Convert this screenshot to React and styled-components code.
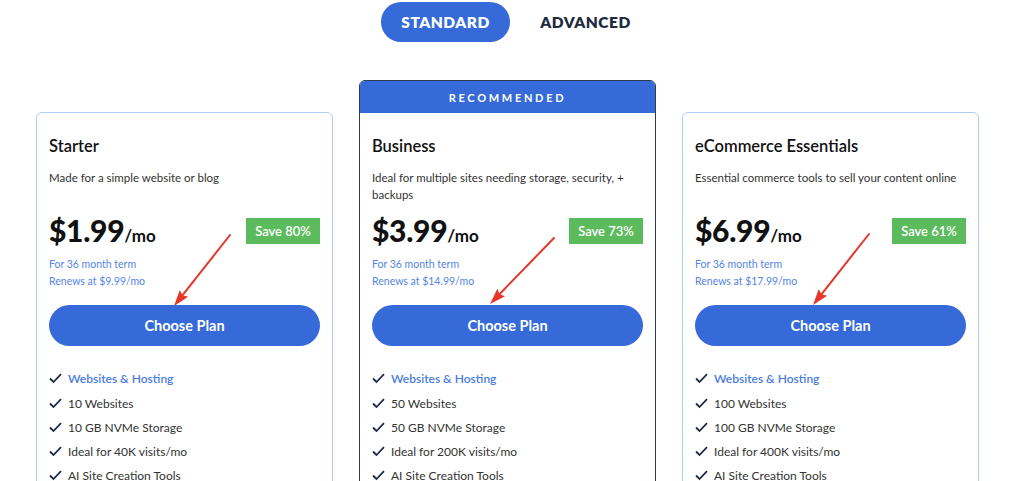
import React from 'react';
import styled, { createGlobalStyle } from 'styled-components';

const GlobalStyle = createGlobalStyle`
  html, body {
    margin: 0;
    padding: 0;
    background: #ffffff;
    overflow: hidden;
  }
  body {
    font-family: Lato, "Open Sans", sans-serif;
    color: #222;
  }
`;

const Page = styled.div`
  width: 1024px;
  height: 481px;
  overflow: hidden;
`;

const Toggle = styled.div`
  display: flex;
  justify-content: center;
  align-items: center;
  gap: 11px;
  padding-top: 2px;
  padding-left: 7px;
`;

const ToggleButton = styled.div`
  width: 129px;
  height: 40px;
  border-radius: 20px;
  display: flex;
  align-items: center;
  justify-content: center;
  font-size: 15.5px;
  font-weight: 800;
  letter-spacing: 0.5px;
  background: ${({ $active }) => ($active ? '#356ad8' : 'transparent')};
  color: ${({ $active }) => ($active ? '#ffffff' : '#202b3f')};
`;

const Cards = styled.div`
  display: flex;
  align-items: flex-start;
  gap: 26px;
  margin-top: 38px;
  padding-left: 36px;
`;

const Card = styled.div`
  position: relative;
  width: 297px;
  box-sizing: border-box;
  margin-top: ${({ $recommended }) => ($recommended ? '0' : '32px')};
  border: 1px solid ${({ $recommended }) => ($recommended ? '#2e3a4d' : '#b3cdf2')};
  border-radius: 6px;
  overflow: hidden;
  background: #fff;
`;

const Ribbon = styled.div`
  height: 32px;
  background: #356ad8;
  color: #fff;
  display: flex;
  align-items: center;
  justify-content: center;
  font-size: 11px;
  font-weight: 700;
  letter-spacing: 2.7px;
`;

const Body = styled.div`
  position: relative;
  padding: 23px 12px 0;
  height: 400px;
`;

const Title = styled.h3`
  margin: 0;
  font-size: 16.5px;
  line-height: 20px;
  font-weight: 600;
  color: #111;
`;

const Desc = styled.p`
  margin: 13px 0 0;
  height: 34px;
  font-size: 11.5px;
  line-height: 17px;
  color: #333;
`;

const PriceRow = styled.div`
  display: flex;
  align-items: center;
  justify-content: space-between;
  margin-top: 12px;
  height: 30px;
`;

const Price = styled.div`
  font-size: 30px;
  font-weight: 900;
  color: #111;
  letter-spacing: -0.3px;

  span {
    font-size: 17px;
    font-weight: 700;
    letter-spacing: 0;
  }
`;

const SaveBadge = styled.div`
  width: 74px;
  height: 26px;
  margin-top: 2px;
  background: #5cbb5c;
  color: #fff;
  display: flex;
  align-items: center;
  justify-content: center;
  font-size: 13px;
  font-weight: 600;
`;

const Term = styled.div`
  margin-top: 11px;
  font-size: 10.5px;
  line-height: 17px;
  color: #5585e6;
`;

const ChooseButton = styled.button`
  display: block;
  width: 100%;
  height: 41px;
  margin-top: 15px;
  border: none;
  border-radius: 21px;
  background: #356ad8;
  color: #fff;
  font-family: inherit;
  font-size: 14.5px;
  font-weight: 700;
`;

const Features = styled.ul`
  list-style: none;
  margin: 20px 0 0;
  padding: 0;
`;

const Feature = styled.li`
  display: flex;
  align-items: center;
  gap: 6px;
  height: ${({ $link }) => ($link ? '25px' : '24px')};
  font-size: 12px;
  color: ${({ $link }) => ($link ? '#4a7ce0' : '#333')};
  font-weight: ${({ $link }) => ($link ? 600 : 400)};
`;

const Arrow = styled.svg`
  position: absolute;
  left: 0;
  top: 0;
  pointer-events: none;
`;

const Check = () => (
  <svg width="13" height="11" viewBox="0 0 13 11">
    <polyline points="1,5.5 4.5,9 12,1.2" fill="none" stroke="#1e2b48" strokeWidth="1.8" />
  </svg>
);

const plans = [
  {
    name: 'Starter',
    desc: 'Made for a simple website or blog',
    price: '$1.99',
    save: 'Save 80%',
    renew: '$9.99/mo',
    features: ['10 Websites', '10 GB NVMe Storage', 'Ideal for 40K visits/mo', 'AI Site Creation Tools'],
    arrow: [193, 122, 137, 193],
  },
  {
    name: 'Business',
    desc: 'Ideal for multiple sites needing storage, security, + backups',
    price: '$3.99',
    save: 'Save 73%',
    renew: '$14.99/mo',
    features: ['50 Websites', '50 GB NVMe Storage', 'Ideal for 200K visits/mo', 'AI Site Creation Tools'],
    arrow: [194, 125, 130, 191],
    recommended: true,
  },
  {
    name: 'eCommerce Essentials',
    desc: 'Essential commerce tools to sell your content online',
    price: '$6.99',
    save: 'Save 61%',
    renew: '$17.99/mo',
    features: ['100 Websites', '100 GB NVMe Storage', 'Ideal for 400K visits/mo', 'AI Site Creation Tools'],
    arrow: [186, 121, 130, 192],
  },
];

const RedArrow = ({ points }) => {
  const [x1, y1, x2, y2] = points;
  const ang = Math.atan2(y2 - y1, x2 - x1);
  const len = 17;
  const half = 0.32;
  const ax = x2 - len * Math.cos(ang - half);
  const ay = y2 - len * Math.sin(ang - half);
  const bx = x2 - len * Math.cos(ang + half);
  const by = y2 - len * Math.sin(ang + half);
  const mx = x2 - len * 0.8 * Math.cos(ang);
  const my = y2 - len * 0.8 * Math.sin(ang);
  return (
    <Arrow width="297" height="300" viewBox="0 0 297 300">
      <line x1={x1} y1={y1} x2={mx} y2={my} stroke="#e5362a" strokeWidth="2" strokeLinecap="round" />
      <polygon points={`${x2},${y2} ${ax},${ay} ${mx},${my} ${bx},${by}`} fill="#e5362a" />
    </Arrow>
  );
};

const PlanCard = ({ plan }) => (
  <Card $recommended={plan.recommended}>
    {plan.recommended && <Ribbon>RECOMMENDED</Ribbon>}
    <Body>
      <Title>{plan.name}</Title>
      <Desc>{plan.desc}</Desc>
      <PriceRow>
        <Price>
          {plan.price}
          <span>/mo</span>
        </Price>
        <SaveBadge>{plan.save}</SaveBadge>
      </PriceRow>
      <Term>
        For 36 month term
        <br />
        Renews at {plan.renew}
      </Term>
      <ChooseButton>Choose Plan</ChooseButton>
      <Features>
        <Feature $link>
          <Check />
          Websites &amp; Hosting
        </Feature>
        {plan.features.map(f => (
          <Feature key={f}>
            <Check />
            {f}
          </Feature>
        ))}
      </Features>
      <RedArrow points={plan.arrow} />
    </Body>
  </Card>
);

const App = () => (
  <Page>
    <GlobalStyle />
    <Toggle>
      <ToggleButton $active>STANDARD</ToggleButton>
      <ToggleButton>ADVANCED</ToggleButton>
    </Toggle>
    <Cards>
      {plans.map(p => (
        <PlanCard key={p.name} plan={p} />
      ))}
    </Cards>
  </Page>
);

export default App;
